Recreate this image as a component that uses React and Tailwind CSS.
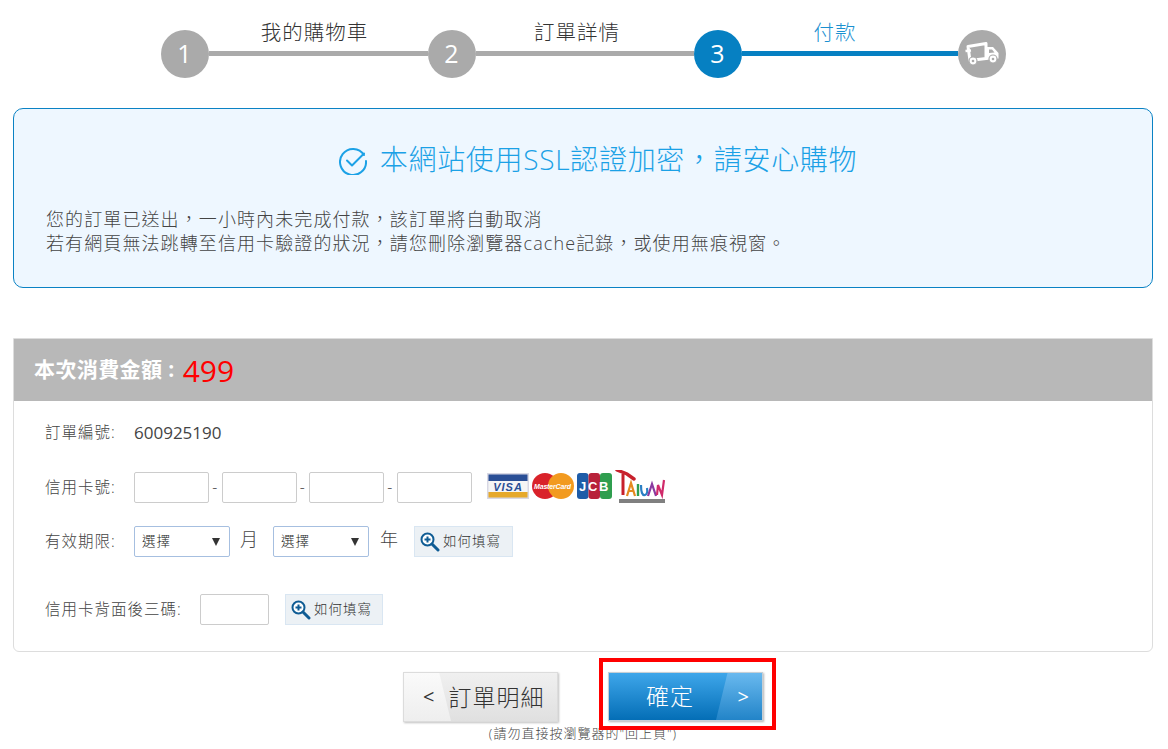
import React from 'react';

const FONT = 'font-["Open_Sans","Noto_Sans_CJK_TC",sans-serif]';

function TruckIcon() {
  return (
    <svg width="36" height="26" viewBox="0 0 36 26" fill="none">
      <path d="M4 5.5 L22 2.5 L22 17.5 L6 19.5 Z" stroke="#fff" strokeWidth="3" strokeLinejoin="round" />
      <path d="M1.5 10 L7 9.5" stroke="#fff" strokeWidth="2.6" />
      <path d="M22 6 L29 6 L34.5 12 L34.5 17.5 L22 19 Z" fill="#fff" />
      <path d="M25 8.5 L28 8.5 L30.5 11.5 L25 12 Z" fill="#aaa" />
      <circle cx="9" cy="20" r="4" fill="#fff" stroke="#aaa" strokeWidth="1.2" />
      <circle cx="9" cy="20" r="1.3" fill="#aaa" />
      <circle cx="29" cy="18" r="4" fill="#fff" stroke="#aaa" strokeWidth="1.2" />
      <circle cx="29" cy="18" r="1.3" fill="#aaa" />
    </svg>
  );
}

function Circle({ active, children }) {
  return (
    <div className={`flex h-12 w-12 shrink-0 items-center justify-center rounded-full text-[25px] text-white ${active ? 'bg-[#0680c2]' : 'bg-[#aaaaaa]'}`}>
      {children}
    </div>
  );
}

function Connector({ label, width, offset, active }) {
  return (
    <div className={`-mt-[14px] flex flex-col ${width}`}>
      <div className={`h-[30px] pt-[1px] text-center text-[20.5px] font-light leading-[30px] ${offset} ${active ? 'text-[#1a90d0]' : 'text-[#333]'}`}>{label}</div>
      <div className={`mt-[5px] h-[5px] ${active ? 'bg-[#0680c2]' : 'bg-[#aaaaaa]'}`} />
    </div>
  );
}

function CardLogos() {
  return (
    <svg width="182" height="36" viewBox="0 0 182 36" className="ml-[15px] shrink-0">
      <rect x="0" y="3" width="42" height="26" fill="#d8d8e4" />
      <rect x="1.5" y="4.5" width="39" height="6.5" fill="#2a4f96" />
      <rect x="1.5" y="11" width="39" height="11" fill="#f5f5f5" />
      <rect x="1.5" y="22" width="39" height="5.5" fill="#e6a92b" />
      <text x="21" y="21" textAnchor="middle" fontSize="11" fontWeight="700" fontStyle="italic" fill="#2a4f96" fontFamily="Liberation Sans">VISA</text>
      <circle cx="58" cy="16" r="13" fill="#d9222a" />
      <circle cx="74" cy="16" r="13" fill="#f29a1f" />
      <text x="66" y="18.5" textAnchor="middle" fontSize="7" fontWeight="700" fontStyle="italic" fill="#fff" fontFamily="Liberation Sans" textLength="38">MasterCard</text>
      <rect x="90" y="3" width="11.5" height="26" rx="3" fill="#1e5ca8" />
      <rect x="101.5" y="3" width="11.5" height="26" rx="3" fill="#b8223a" />
      <rect x="113" y="3" width="12" height="26" rx="3" fill="#2f9e4f" />
      <text x="107.5" y="21" textAnchor="middle" fontSize="13" fontWeight="700" fill="#fff" fontFamily="Liberation Sans" letterSpacing="1.6">JCB</text>
      <path d="M130 0 L140 4 L147 9" stroke="#c8202c" strokeWidth="3.4" fill="none" strokeLinecap="round" />
      <path d="M136 4 L136 25" stroke="#c8202c" strokeWidth="3" />
      <path d="M140 26 L144 13 L148 26 M141 21 L147 21" stroke="#e58a1f" strokeWidth="2.2" fill="none" />
      <path d="M151 14 L151 26" stroke="#2f9e4f" strokeWidth="2.4" />
      <path d="M154 15 Q154 26 158 25 Q161 24 160 18" stroke="#2a7fc4" strokeWidth="2.2" fill="none" />
      <path d="M161 26 L165 14 L169 26" stroke="#8a3aa0" strokeWidth="2.2" fill="none" />
      <path d="M170 25 L171 15 L175 25 L177 10" stroke="#d02a6a" strokeWidth="2.2" fill="none" />
      <rect x="132" y="29" width="46" height="4" fill="#555" opacity="0.75" />
    </svg>
  );
}

function HelpButton({ className }) {
  return (
    <div className={`flex h-[31px] shrink-0 items-center border border-[#d9e6f2] bg-[#ecf1f5] pl-[5px] text-[13.5px] font-light text-[#333] ${className}`}>
      <svg width="20" height="20" viewBox="0 0 20 20" className="mr-[3px]">
        <circle cx="7.5" cy="7.5" r="6" fill="#fff" stroke="#0f5c94" strokeWidth="2" />
        <path d="M4.5 7.5 H10.5 M7.5 4.5 V10.5" stroke="#0f5c94" strokeWidth="2" />
        <path d="M12 12 L18 18" stroke="#0f5c94" strokeWidth="3" strokeLinecap="round" />
      </svg>
      如何填寫
    </div>
  );
}

function FakeSelect() {
  return (
    <div className="flex h-[31px] w-[96px] shrink-0 items-center justify-between rounded-[2px] border border-[#a6bfe0] bg-white pl-[7px] pr-[9px] text-[13.5px] text-[#222]">
      <span>選擇</span>
      <span className="h-0 w-0 border-x-[4px] border-t-[8px] border-x-transparent border-t-[#333]" />
    </div>
  );
}

function CardInput() {
  return <div className="h-[31px] w-[75px] shrink-0 rounded-[2px] border border-[#ccc] bg-white" />;
}

export default function App() {
  return (
    <div className={`h-[749px] w-[1168px] overflow-hidden bg-white pl-[13px] pr-[15px] tracking-[1px] text-[#333] ${FONT}`}>
      {/* Steps */}
      <div className="flex items-start pl-[148px] pt-[30px]">
        <Circle>1</Circle>
        <Connector label="我的購物車" width="w-[219px]" offset="pr-[8px]" />
        <Circle>2</Circle>
        <Connector label="訂單詳情" width="w-[218px]" offset="pr-[16px]" />
        <Circle active>3</Circle>
        <Connector label="付款" width="w-[216px]" offset="pr-[30px]" active />
        <Circle><TruckIcon /></Circle>
      </div>

      {/* Notice */}
      <div className="mt-[30px] h-[180px] rounded-[10px] border border-[#0a82c4] bg-[#eef7ff] px-[32px] pt-[30px]">
        <div className="flex items-center justify-center pl-[30px] text-[28px] font-light leading-[40px] tracking-[0.7px] text-[#1ba1e6]">
          <svg width="28" height="28" viewBox="0 0 28 28" fill="none" className="mr-[13px] mt-[4px]">
            <path d="M25 8 A13 13 0 1 0 27 14" stroke="#1ba1e6" strokeWidth="2" strokeLinecap="round" />
            <path d="M8 13.5 L13 18.5 L25 6.5" stroke="#1ba1e6" strokeWidth="2" strokeLinecap="round" strokeLinejoin="round" />
          </svg>
          本網站使用SSL認證加密{'\uFF0C'}請安心購物
        </div>
        <div className="mt-[28px] text-[18px] font-light leading-[24px] tracking-[1.1px] text-[#444]">
          <p>您的訂單已送出{'\uFF0C'}一小時內未完成付款{'\uFF0C'}該訂單將自動取消</p>
          <p>若有網頁無法跳轉至信用卡驗證的狀況{'\uFF0C'}請您刪除瀏覽器cache記錄{'\uFF0C'}或使用無痕視窗。</p>
        </div>
      </div>

      {/* Payment form */}
      <div className="mt-[50px] h-[314px] rounded-b-[6px] border border-[#dddddd]">
        <div className="flex h-[62px] items-center bg-[#b8b8b8] pl-[20px] text-[21px] font-bold tracking-[0.4px] text-white">
          本次消費金額 :
          <span className="ml-[8px] text-[30px] font-normal tracking-normal text-[#ff0000]">499</span>
        </div>
        <div className="pl-[31px] text-[15.5px] font-light text-[#444]">
          <div className="mt-[17px] flex h-[30px] items-center">
            <span className="w-[89px]">訂單編號:</span>
            <span className="text-[17px] font-normal tracking-normal">600925190</span>
          </div>
          <div className="mt-[24px] flex h-[31px] items-center">
            <span className="w-[89px]">信用卡號:</span>
            <CardInput />
            <span className="w-[12.5px] text-center">-</span>
            <CardInput />
            <span className="w-[12.5px] text-center">-</span>
            <CardInput />
            <span className="w-[12.5px] text-center">-</span>
            <CardInput />
            <CardLogos />
          </div>
          <div className="mt-[23px] flex h-[31px] items-center">
            <span className="w-[89px]">有效期限:</span>
            <FakeSelect />
            <span className="-mt-[4px] w-[43px] pl-[10px] text-[18px]">月</span>
            <FakeSelect />
            <span className="-mt-[4px] w-[45px] pl-[11px] text-[18px]">年</span>
            <HelpButton className="w-[99px]" />
          </div>
          <div className="mt-[37px] flex h-[31px] items-center">
            <span className="w-[155px]">信用卡背面後三碼:</span>
            <div className="h-[31px] w-[69px] rounded-[2px] border border-[#ccc] bg-white" />
            <HelpButton className="ml-[16px] w-[98px]" />
          </div>
        </div>
      </div>

      {/* Actions */}
      <div className="relative z-10 mt-[6px] flex items-start justify-center pl-[13px]">
        <div className="relative mt-[14px] flex h-[50px] w-[155px] items-center overflow-hidden border border-[#dcdcdc] bg-[linear-gradient(to_bottom,#f0f0f0,#e0e0e0)] pl-[19px] text-[23px] font-light text-[#333] shadow-[1px_1px_2px_rgba(0,0,0,0.25)]">
          <span className="absolute inset-y-0 left-0 w-[47px] bg-[linear-gradient(to_bottom,#fafafa,#eeeeee)] [clip-path:polygon(0_0,75%_0,100%_100%,0_100%)]" />
          <span className="relative mr-[13px] text-[20px] font-normal">&lt;</span>
          <span className="relative">訂單明細</span>
        </div>
        <div className="ml-[41px] border-[4px] border-[#ff0000] pb-[5px] pl-[5px] pr-[9px] pt-[10px]">
          <div className="relative flex h-[49px] w-[155px] items-center overflow-hidden border border-[#c5cfd6] bg-[linear-gradient(to_bottom,#3ea6ea,#046eb6)] text-white shadow-[1px_1px_2px_rgba(0,0,0,0.3)]">
            <span className="absolute inset-y-0 right-0 w-[46px] bg-[linear-gradient(to_bottom,#69b9ef,#2284c8)] [clip-path:polygon(25%_0,100%_0,100%_100%,0_100%)]" />
            <span className="relative ml-[37px] text-[23px] font-light">確定</span>
            <span className="absolute right-[12px] text-[20px]">&gt;</span>
          </div>
        </div>
      </div>
      <div className="-mt-[5px] text-center text-[13px] font-light leading-[16px] text-[#444]">(請勿直接按瀏覽器的"回上頁")</div>
    </div>
  );
}
